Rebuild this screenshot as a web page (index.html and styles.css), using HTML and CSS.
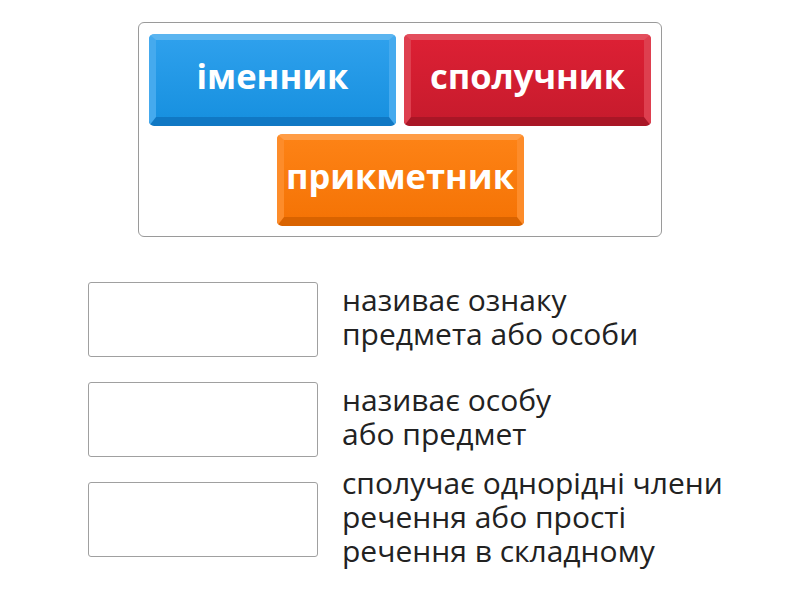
FILE: index.html
```html
<!DOCTYPE html>
<html lang="uk">
<head>
<meta charset="utf-8">
<link rel="stylesheet" href="styles.css">
</head>
<body>
<div class="bank">
  <div class="tile blue">іменник</div>
  <div class="tile red">сполучник</div>
  <div class="tile orange">прикметник</div>
</div>
<div class="rows">
  <div class="row"><div class="slot"></div><div class="def">називає ознаку<br>предмета або особи</div></div>
  <div class="row"><div class="slot"></div><div class="def">називає особу<br>або предмет</div></div>
  <div class="row"><div class="slot"></div><div class="def">сполучає однорідні члени<br>речення або прості<br>речення в складному</div></div>
</div>
</body>
</html>
```
FILE: styles.css
```css
html, body {
  margin: 0;
  padding: 0;
  background: #fff;
  font-family: "Open Sans", "Noto Sans", sans-serif;
}
body {
  min-height: 600px;
}
.bank {
  box-sizing: border-box;
  margin: 22px 0 0 138px;
  width: 524px;
  height: 215px;
  border: 1px solid #9a9a9a;
  border-radius: 6px;
  padding: 11px 10px 10px;
  display: flex;
  flex-wrap: wrap;
  justify-content: center;
  gap: 8px;
  align-content: flex-start;
}
.tile {
  box-sizing: border-box;
  width: 247px;
  height: 92px;
  border-radius: 5px;
  border-style: solid;
  border-width: 6px 7px 9px 7px;
  display: flex;
  align-items: center;
  justify-content: center;
  color: #fff;
  font-weight: 700;
  font-size: 34.5px;
  padding-bottom: 6px;
  white-space: nowrap;
}
.blue {
  background: linear-gradient(#2ea0ec, #1891e0);
  border-color: #5bb5f0 #45aaee #1078c4 #45aaee;
}
.red {
  background: linear-gradient(#dc2034, #c81b2d);
  border-color: #e34e5d #de3f4f #a91626 #de3f4f;
}
.orange {
  background: linear-gradient(#fd8215, #f57406);
  border-color: #ff9c45 #fd8c2a #d96300 #fd8c2a;
}
.rows {
  margin: 45px 0 0 88px;
  display: flex;
  flex-direction: column;
  gap: 25px;
}
.row {
  height: 75px;
  display: flex;
  align-items: center;
  gap: 24px;
}
.slot {
  box-sizing: border-box;
  width: 230px;
  height: 75px;
  border: 1px solid #a0a0a0;
  border-radius: 3px;
  flex: none;
}
.def {
  font-size: 30px;
  line-height: 34px;
  color: #222;
  white-space: nowrap;
  margin-bottom: 6px;
}
```
